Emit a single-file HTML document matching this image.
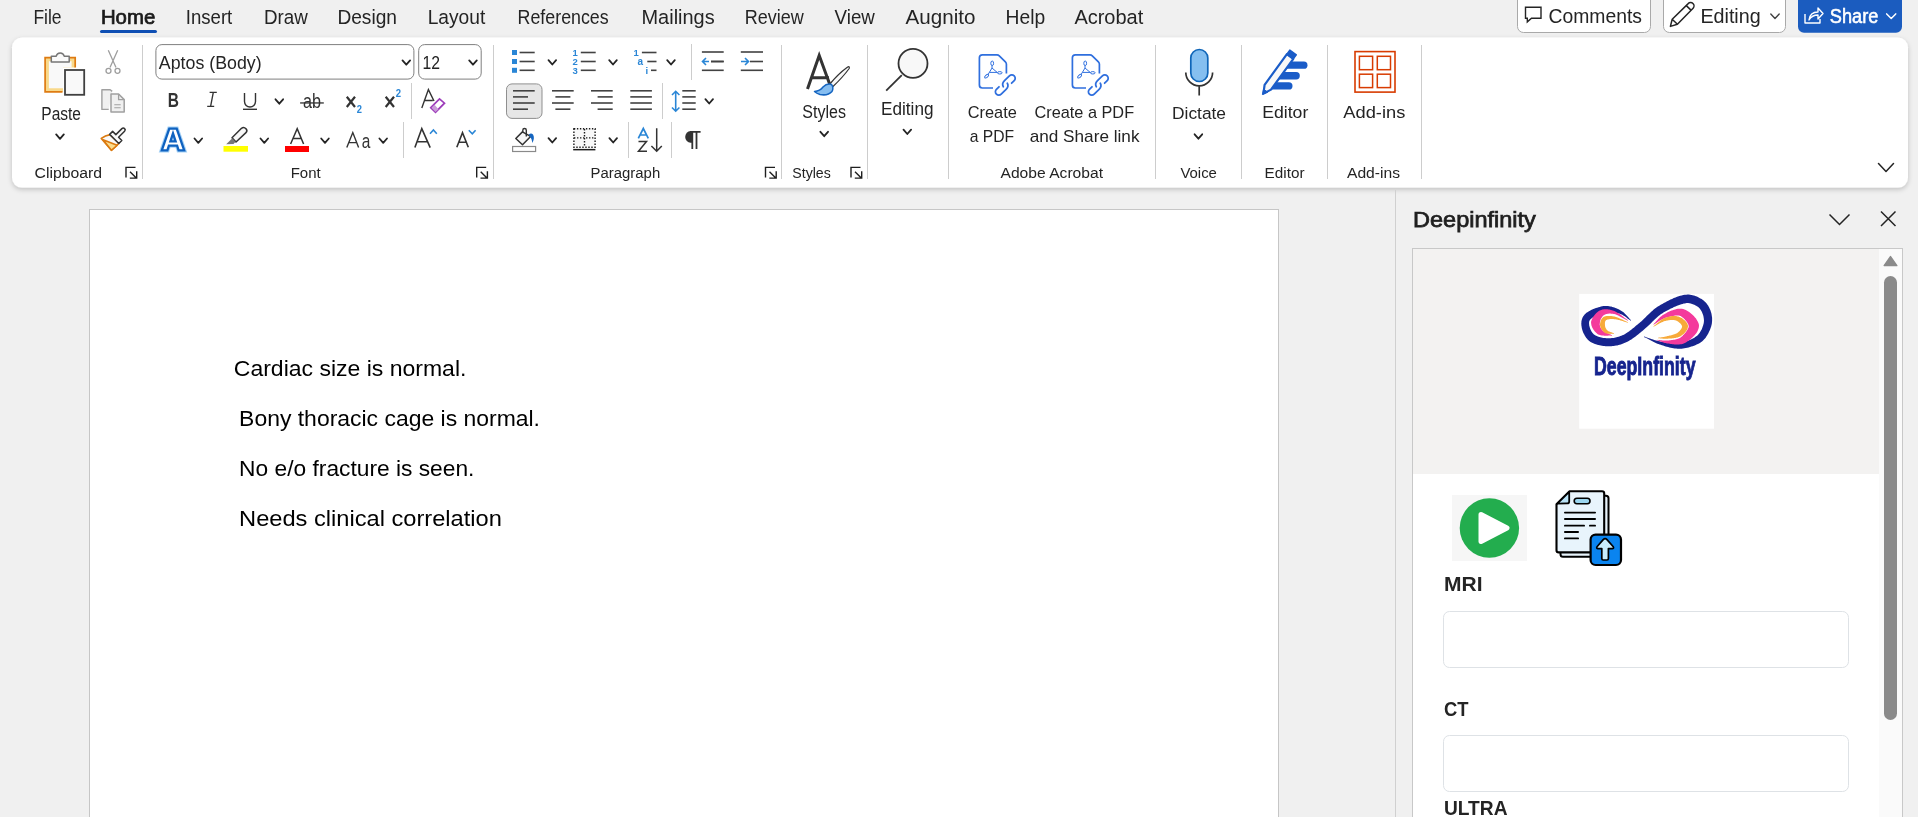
<!DOCTYPE html><html><head><meta charset="utf-8"><style>html,body{margin:0;padding:0;background:#f0f0f0;width:1918px;height:817px;overflow:hidden}svg{position:absolute;left:0;top:0;font-family:"Liberation Sans", sans-serif;-webkit-font-smoothing:antialiased}text{will-change:transform}</style></head><body>
<svg width="1918" height="817" viewBox="0 0 1918 817">
<defs><filter id="sh" x="-5%" y="-20%" width="110%" height="150%"><feDropShadow dx="0" dy="2" stdDeviation="2.8" flood-color="#000" flood-opacity="0.2"/></filter><filter id="sh2" x="-5%" y="-5%" width="110%" height="110%"><feDropShadow dx="0" dy="0" stdDeviation="1" flood-color="#000" flood-opacity="0.10"/></filter></defs>
<rect x="0" y="0" width="1918" height="817" fill="#f0f0f0"/>
<text x="33.4" y="23.9" font-size="19.7" font-weight="normal" fill="#242424" textLength="28.1" lengthAdjust="spacingAndGlyphs">File</text>
<text x="185.8" y="23.9" font-size="19.7" font-weight="normal" fill="#242424" textLength="46.5" lengthAdjust="spacingAndGlyphs">Insert</text>
<text x="264.0" y="23.9" font-size="19.7" font-weight="normal" fill="#242424" textLength="43.8" lengthAdjust="spacingAndGlyphs">Draw</text>
<text x="337.4" y="23.9" font-size="19.7" font-weight="normal" fill="#242424" textLength="59.6" lengthAdjust="spacingAndGlyphs">Design</text>
<text x="427.7" y="23.9" font-size="19.7" font-weight="normal" fill="#242424" textLength="57.6" lengthAdjust="spacingAndGlyphs">Layout</text>
<text x="517.6" y="23.9" font-size="19.7" font-weight="normal" fill="#242424" textLength="91.1" lengthAdjust="spacingAndGlyphs">References</text>
<text x="641.5" y="23.9" font-size="19.7" font-weight="normal" fill="#242424" textLength="73.2" lengthAdjust="spacingAndGlyphs">Mailings</text>
<text x="744.7" y="23.9" font-size="19.7" font-weight="normal" fill="#242424" textLength="59.0" lengthAdjust="spacingAndGlyphs">Review</text>
<text x="834.6" y="23.9" font-size="19.7" font-weight="normal" fill="#242424" textLength="40.2" lengthAdjust="spacingAndGlyphs">View</text>
<text x="905.5" y="23.9" font-size="19.7" font-weight="normal" fill="#242424" textLength="69.9" lengthAdjust="spacingAndGlyphs">Augnito</text>
<text x="1005.6" y="23.9" font-size="19.7" font-weight="normal" fill="#242424" textLength="39.6" lengthAdjust="spacingAndGlyphs">Help</text>
<text x="1074.4" y="23.9" font-size="19.7" font-weight="normal" fill="#242424" textLength="68.9" lengthAdjust="spacingAndGlyphs">Acrobat</text>
<text x="100.9" y="23.9" font-size="19.7" fill="#1a1a1a" stroke="#1a1a1a" stroke-width="0.7" textLength="54.4" lengthAdjust="spacingAndGlyphs">Home</text>
<rect x="100" y="29.9" width="57" height="3.2" rx="1.6" fill="#0f4fb4"/>
<rect x="1517.5" y="-6" width="133" height="38.5" rx="6" fill="#ffffff" stroke="#a9a9a9" stroke-width="1"/>
<path d="M1525.5 7.3 h15.5 v11 h-9.5 l-4.2 3.6 v-3.6 h-1.8 z" fill="none" stroke="#242424" stroke-width="1.4" stroke-linejoin="miter"/>
<text x="1548.5" y="23.4" font-size="19.5" font-weight="normal" fill="#242424" textLength="93.5" lengthAdjust="spacingAndGlyphs">Comments</text>
<rect x="1663.5" y="-6" width="122" height="38.5" rx="6" fill="#ffffff" stroke="#a9a9a9" stroke-width="1"/>
<path d="M1670.4 26.4 L1672.2 19.3 L1688.2 3.6 a2.9 2.9 0 0 1 4.9 4.6 L1677.4 24.3 Z M1672.2 19.3 L1677.4 24.3 M1686.3 5.6 L1691 10.1" fill="none" stroke="#242424" stroke-width="1.5" stroke-linejoin="round"/>
<text x="1700.4" y="23.4" font-size="19.5" font-weight="normal" fill="#242424" textLength="60.3" lengthAdjust="spacingAndGlyphs">Editing</text>
<path d="M1770.8 13.9 L1775.0 18.4 L1779.2 13.9" fill="none" stroke="#424242" stroke-width="1.4" stroke-linecap="round" stroke-linejoin="round"/>
<rect x="1798" y="-6" width="104" height="38.8" rx="6" fill="#1b5cbf"/>
<path d="M1805 14 v9 h15 v-4" fill="none" stroke="#fff" stroke-width="1.4" stroke-linejoin="round"/><path d="M1809 20 q1 -8 9 -8 v-4 l5 5.5 l-5 5.5 v-4 q-6 0 -9 5 z" fill="none" stroke="#fff" stroke-width="1.4" stroke-linejoin="round"/>
<text x="1829.8" y="23.4" font-size="19.5" fill="#fff" stroke="#fff" stroke-width="0.55" textLength="48.5" lengthAdjust="spacingAndGlyphs">Share</text>
<path d="M1886.7 13.9 L1891.2 18.5 L1895.7 13.9" fill="none" stroke="#ffffff" stroke-width="1.5" stroke-linecap="round" stroke-linejoin="round"/>
<rect x="12" y="37.6" width="1896" height="150" rx="10" fill="#ffffff" filter="url(#sh)"/>
<rect x="142" y="45" width="1" height="134" fill="#cdcdcd"/>
<rect x="493" y="45" width="1" height="134" fill="#cdcdcd"/>
<rect x="781" y="45" width="1" height="134" fill="#cdcdcd"/>
<rect x="867" y="45" width="1" height="134" fill="#cdcdcd"/>
<rect x="948" y="45" width="1" height="134" fill="#cdcdcd"/>
<rect x="1155" y="45" width="1" height="134" fill="#cdcdcd"/>
<rect x="1241" y="45" width="1" height="134" fill="#cdcdcd"/>
<rect x="1327" y="45" width="1" height="134" fill="#cdcdcd"/>
<rect x="1421" y="45" width="1" height="134" fill="#cdcdcd"/>
<text x="34.5" y="178.0" font-size="15.5" font-weight="normal" fill="#242424" textLength="67.5" lengthAdjust="spacingAndGlyphs">Clipboard</text>
<text x="290.7" y="178.0" font-size="15.5" font-weight="normal" fill="#242424" textLength="30.0" lengthAdjust="spacingAndGlyphs">Font</text>
<text x="590.6" y="178.0" font-size="15.5" font-weight="normal" fill="#242424" textLength="69.6" lengthAdjust="spacingAndGlyphs">Paragraph</text>
<text x="792.3" y="178.0" font-size="15.5" font-weight="normal" fill="#242424" textLength="38.5" lengthAdjust="spacingAndGlyphs">Styles</text>
<text x="1000.5" y="178.0" font-size="15.5" font-weight="normal" fill="#242424" textLength="102.5" lengthAdjust="spacingAndGlyphs">Adobe Acrobat</text>
<text x="1180.4" y="178.0" font-size="15.5" font-weight="normal" fill="#242424" textLength="36.5" lengthAdjust="spacingAndGlyphs">Voice</text>
<text x="1264.6" y="178.0" font-size="15.5" font-weight="normal" fill="#242424" textLength="39.9" lengthAdjust="spacingAndGlyphs">Editor</text>
<text x="1347.0" y="178.0" font-size="15.5" font-weight="normal" fill="#242424" textLength="53.0" lengthAdjust="spacingAndGlyphs">Add-ins</text>
<path d="M126 177.5 V167.4 H135.5 M130 171.8 L136.3 178.0 M129.8 178.1 H136.7 V171.3" fill="none" stroke="#1f1f1f" stroke-width="1.4"/>
<path d="M476.7 177.5 V167.4 H486.2 M480.7 171.8 L487.0 178.0 M480.5 178.1 H487.4 V171.3" fill="none" stroke="#1f1f1f" stroke-width="1.4"/>
<path d="M765.5 177.5 V167.4 H775.0 M769.5 171.8 L775.8 178.0 M769.3 178.1 H776.2 V171.3" fill="none" stroke="#1f1f1f" stroke-width="1.4"/>
<path d="M851 177.5 V167.4 H860.5 M855 171.8 L861.3 178.0 M854.8 178.1 H861.7 V171.3" fill="none" stroke="#1f1f1f" stroke-width="1.4"/>
<path d="M1878.5 163.5 L1886.0 171.5 L1893.5 163.5" fill="none" stroke="#242424" stroke-width="1.5" stroke-linecap="round" stroke-linejoin="round"/>
<path d="M45.1 57.7 H75.2 V67.5 H63 V91.8 H45.1 Z" fill="#f8d98b"/>
<path d="M48.9 61.2 H71.6 V67.5 H63 V88.2 H48.9 Z" fill="#f9f9f9"/>
<path d="M62.5 91.8 H45.1 V57.7 H75.2 V67.5" fill="none" stroke="#de7b12" stroke-width="1.7"/>
<path d="M51.3 62 V56.2 H56.2 A4.1 4.1 0 0 1 64.2 56.2 H69.2 V62 Z" fill="#fafafa" stroke="#767676" stroke-width="1.5" stroke-linejoin="round"/>
<rect x="63" y="68" width="23" height="28.6" fill="#ffffff"/>
<rect x="65" y="70" width="19.2" height="24.8" fill="#f9f9f9" stroke="#404040" stroke-width="1.8"/>
<text x="41.3" y="120.0" font-size="17.5" font-weight="normal" fill="#242424" textLength="39.7" lengthAdjust="spacingAndGlyphs">Paste</text>
<path d="M56.2 134.4 L60.0 138.8 L63.8 134.4" fill="none" stroke="#242424" stroke-width="1.8" stroke-linecap="round" stroke-linejoin="round"/>
<path d="M108.3 50.3 L116 67.5 M117.7 50.3 L110 67.5" stroke="#9e9e9e" stroke-width="1.3" fill="none"/><circle cx="108.5" cy="70.8" r="2.5" fill="none" stroke="#9e9e9e" stroke-width="1.3"/><circle cx="117.5" cy="70.8" r="2.5" fill="none" stroke="#9e9e9e" stroke-width="1.3"/>
<path d="M108.7 109.4 h-6.8 v-19.6 h8.3 l2 1.6" fill="#f0f0f0" stroke="#a0a0a0" stroke-width="1.4" stroke-linejoin="round"/>
<path d="M111 112 v-18 h7.6 l5.6 5.6 v12.4 z" fill="#f0f0f0" stroke="#a0a0a0" stroke-width="1.5" stroke-linejoin="round"/><path d="M118.6 94 v5.6 h5.6" fill="none" stroke="#a0a0a0" stroke-width="1.3"/><path d="M114.3 104.7 h6.4 M114.3 107.7 h6.4" stroke="#a0a0a0" stroke-width="1.1"/>
<g transform="translate(115.8 137.4) rotate(45)"><path d="M-6 2 Q-9 6 -9.5 11 L6 12.2 L6.3 2 Z" fill="#fafafa" stroke="#db7a10" stroke-width="1.7" stroke-linejoin="round"/><path d="M-7.3 10.7 L6.5 4.7 L6 12.2 Z" fill="#fbdc8c" stroke="#db7a10" stroke-width="1.5" stroke-linejoin="round"/><path d="M-6.5 2.2 v-4.2 h4.6 v-8.5 a1.9 1.9 0 0 1 3.8 0 v8.5 h4.6 v4.2 z" fill="#fafafa" stroke="#333" stroke-width="1.5" stroke-linejoin="round"/></g>
<rect x="155.9" y="44.6" width="258" height="34.5" rx="6" fill="#fff" stroke="#7f7f7f" stroke-width="1"/>
<text x="158.8" y="69.1" font-size="17.6" font-weight="normal" fill="#242424" textLength="102.8" lengthAdjust="spacingAndGlyphs">Aptos (Body)</text>
<path d="M402.5 60.4 L406.3 64.7 L410.1 60.4" fill="none" stroke="#242424" stroke-width="1.8" stroke-linecap="round" stroke-linejoin="round"/>
<rect x="418.7" y="44.6" width="62.5" height="34.5" rx="6" fill="#fff" stroke="#7f7f7f" stroke-width="1"/>
<text x="422.5" y="69.1" font-size="17.6" font-weight="normal" fill="#242424" textLength="17.5" lengthAdjust="spacingAndGlyphs">12</text>
<path d="M469.2 60.4 L473.0 64.7 L476.8 60.4" fill="none" stroke="#242424" stroke-width="1.8" stroke-linecap="round" stroke-linejoin="round"/>
<text x="167.8" y="106.8" font-size="20" font-weight="bold" fill="#333333" textLength="11.2" lengthAdjust="spacingAndGlyphs">B</text>
<path d="M213.3 92.3 L210.6 106.4 M209.6 92.3 h7.2 M207.2 106.4 h7" stroke="#333333" stroke-width="1.35" fill="none"/>
<path d="M244.5 93 v8.5 a5.5 5.5 0 0 0 11 0 v-8.5" fill="none" stroke="#333333" stroke-width="1.4"/>
<rect x="243" y="108.6" width="14" height="1.4" fill="#333333"/>
<path d="M275.5 99.3 L279.3 103.7 L283.1 99.3" fill="none" stroke="#242424" stroke-width="1.8" stroke-linecap="round" stroke-linejoin="round"/>
<text x="302.9" y="108.4" font-size="19.5" font-weight="normal" fill="#333333" textLength="18.0" lengthAdjust="spacingAndGlyphs">ab</text>
<rect x="300.1" y="102.3" width="23.7" height="1.3" fill="#333333"/>
<path d="M346.8 96.8 L355 107 M355 96.8 L346.8 107" stroke="#333333" stroke-width="2.2"/>
<text x="356.8" y="112.9" font-size="10.5" font-weight="bold" fill="#2a86d6" textLength="5.2" lengthAdjust="spacingAndGlyphs">2</text>
<path d="M385.7 96.8 L394 107 M394 96.8 L385.7 107" stroke="#333333" stroke-width="2.2"/>
<text x="395.8" y="96.6" font-size="10.5" font-weight="bold" fill="#2a86d6" textLength="5.3" lengthAdjust="spacingAndGlyphs">2</text>
<rect x="411" y="83" width="1" height="36" fill="#cdcdcd"/>
<path d="M421.8 108 L428.4 89.6 L434 101 M423.8 100.5 h9" fill="none" stroke="#333333" stroke-width="1.4"/>
<path d="M430.8 107.7 L439.5 98.9 L444.5 103.2 L435.5 112.2 Z" fill="#fff" stroke="#9d3dba" stroke-width="1.7" stroke-linejoin="miter"/><path d="M431.5 107.7 L434.5 104.8 L438.5 109.2 L435.5 112 Z" fill="#c99bd8"/>
<path d="M161.8 150.3 L169.3 128.6 L176.7 128.6 L184.2 150.3 L178.6 150.3 L177.1 145.6 L168.9 145.6 L167.4 150.3 Z M170.4 141.3 L175.6 141.3 L173 133.4 Z" fill="#fff" stroke="#a6d2f6" stroke-width="4.4" stroke-linejoin="miter" fill-rule="evenodd"/>
<path d="M161.8 150.3 L169.3 128.6 L176.7 128.6 L184.2 150.3 L178.6 150.3 L177.1 145.6 L168.9 145.6 L167.4 150.3 Z M170.4 141.3 L175.6 141.3 L173 133.4 Z" fill="#fff" stroke="#0f62c0" stroke-width="2.3" stroke-linejoin="miter" fill-rule="evenodd"/>
<path d="M194.5 138.5 L198.3 142.8 L202.1 138.5" fill="none" stroke="#242424" stroke-width="1.8" stroke-linecap="round" stroke-linejoin="round"/>
<path d="M232 137.7 L241.5 128.3 Q243.8 126.5 246 128.8 Q247.8 131 246 132.6 L236 142 Z" fill="#f8f8f8" stroke="#333333" stroke-width="1.5" stroke-linejoin="round"/>
<path d="M232.3 138.3 L235.6 141.7 L233.5 144 L226.2 144.3 Z" fill="#777"/>
<rect x="223.5" y="146" width="24.5" height="5.7" fill="#ffff00"/>
<path d="M260.5 138.5 L264.3 142.8 L268.1 138.5" fill="none" stroke="#242424" stroke-width="1.8" stroke-linecap="round" stroke-linejoin="round"/>
<path d="M290.6 144 L297.2 128.6 L303.6 144 M292.9 138.6 h8.6" fill="none" stroke="#333333" stroke-width="1.5"/>
<rect x="285" y="146" width="24" height="6" fill="#ff0000"/>
<path d="M321.2 138.5 L325.0 142.8 L328.8 138.5" fill="none" stroke="#242424" stroke-width="1.8" stroke-linecap="round" stroke-linejoin="round"/>
<path d="M346.8 147.6 L352.8 132.6 L358.6 147.6 M348.9 142.6 h7.8" fill="none" stroke="#333333" stroke-width="1.4"/>
<text x="361.8" y="147.6" font-size="20.5" font-weight="normal" fill="#333333" textLength="8.6" lengthAdjust="spacingAndGlyphs">a</text>
<path d="M379.4 138.5 L383.2 142.8 L387.0 138.5" fill="none" stroke="#242424" stroke-width="1.8" stroke-linecap="round" stroke-linejoin="round"/>
<rect x="403" y="122" width="1" height="36" fill="#cdcdcd"/>
<path d="M414.9 147.6 L421.8 128.6 L430.2 147.6 M417.6 141.8 h10" fill="none" stroke="#333333" stroke-width="1.6"/><path d="M430 133.7 L433.4 130 L436.8 133.7" fill="none" stroke="#2a86d6" stroke-width="1.6"/>
<path d="M456.8 147.2 L462.5 132.6 L468.3 147.2 M458.8 142.3 h7.5" fill="none" stroke="#333333" stroke-width="1.6"/><path d="M468.8 130.2 L472.3 133.8 L475.6 130.2" fill="none" stroke="#2a86d6" stroke-width="1.6"/>
<rect x="512" y="50.0" width="5" height="5" fill="#2a86d6"/>
<rect x="519.6" y="51.7" width="15.1" height="1.6" fill="#424242"/>
<rect x="512" y="59.0" width="5" height="5" fill="#2a86d6"/>
<rect x="519.6" y="60.7" width="15.1" height="1.6" fill="#424242"/>
<rect x="512" y="67.8" width="5" height="5" fill="#2a86d6"/>
<rect x="519.6" y="69.5" width="15.1" height="1.6" fill="#424242"/>
<path d="M548.5 60.1 L552.3 64.5 L556.1 60.1" fill="none" stroke="#242424" stroke-width="1.8" stroke-linecap="round" stroke-linejoin="round"/>
<text x="572.5" y="56.1" font-size="9.5" font-weight="bold" fill="#2a86d6">1</text>
<rect x="580.8" y="51.7" width="14.9" height="1.6" fill="#424242"/>
<text x="572.5" y="65.1" font-size="9.5" font-weight="bold" fill="#2a86d6">2</text>
<rect x="580.8" y="60.7" width="14.9" height="1.6" fill="#424242"/>
<text x="572.5" y="73.89999999999999" font-size="9.5" font-weight="bold" fill="#2a86d6">3</text>
<rect x="580.8" y="69.5" width="14.9" height="1.6" fill="#424242"/>
<path d="M609.2 60.1 L613.0 64.5 L616.8 60.1" fill="none" stroke="#242424" stroke-width="1.8" stroke-linecap="round" stroke-linejoin="round"/>
<text x="633.5" y="56" font-size="9.5" font-weight="bold" fill="#2a86d6">1</text><text x="637.5" y="65" font-size="10" font-weight="bold" fill="#2a86d6">a</text><text x="645.5" y="74" font-size="9.5" font-weight="bold" fill="#2a86d6">i</text>
<rect x="641.9" y="51.7" width="14.6" height="1.6" fill="#424242"/>
<rect x="647.3" y="60.7" width="9.2" height="1.6" fill="#424242"/>
<rect x="651.0" y="69.5" width="5.5" height="1.6" fill="#424242"/>
<path d="M667.2 60.1 L671.0 64.5 L674.8 60.1" fill="none" stroke="#242424" stroke-width="1.8" stroke-linecap="round" stroke-linejoin="round"/>
<rect x="691" y="44" width="1" height="36" fill="#cdcdcd"/>
<rect x="701.9" y="51.2" width="21.8" height="1.6" fill="#424242"/>
<rect x="711.0" y="60.7" width="12.7" height="1.6" fill="#424242"/>
<rect x="711.0" y="60.7" width="12.7" height="1.6" fill="#424242"/>
<rect x="701.9" y="69.5" width="21.8" height="1.6" fill="#424242"/>
<path d="M709 61.5 h-6.5 M706 58 l-3.5 3.5 l3.5 3.5" fill="none" stroke="#2a86d6" stroke-width="1.6"/>
<rect x="740.8" y="51.2" width="22.2" height="1.6" fill="#424242"/>
<rect x="750.0" y="60.7" width="13.0" height="1.6" fill="#424242"/>
<rect x="740.8" y="69.5" width="22.2" height="1.6" fill="#424242"/>
<path d="M741 61.5 h7 M745 58 l3.5 3.5 l-3.5 3.5" fill="none" stroke="#2a86d6" stroke-width="1.6"/>
<rect x="506.5" y="83.9" width="35.5" height="34.5" rx="5.5" fill="#e6e6e6" stroke="#8f8f8f" stroke-width="1"/>
<rect x="513.0" y="90.0" width="21.7" height="1.6" fill="#424242"/>
<rect x="513.0" y="96.1" width="15.0" height="1.6" fill="#424242"/>
<rect x="513.0" y="102.2" width="21.7" height="1.6" fill="#424242"/>
<rect x="513.0" y="108.4" width="15.0" height="1.6" fill="#424242"/>
<rect x="552.0" y="90.0" width="21.7" height="1.6" fill="#424242"/>
<rect x="555.4" y="96.1" width="15.0" height="1.6" fill="#424242"/>
<rect x="552.0" y="102.2" width="21.7" height="1.6" fill="#424242"/>
<rect x="555.4" y="108.4" width="15.0" height="1.6" fill="#424242"/>
<rect x="591.0" y="90.0" width="21.7" height="1.6" fill="#424242"/>
<rect x="597.6" y="96.1" width="15.1" height="1.6" fill="#424242"/>
<rect x="591.0" y="102.2" width="21.7" height="1.6" fill="#424242"/>
<rect x="597.6" y="108.4" width="15.1" height="1.6" fill="#424242"/>
<rect x="630.3" y="90.0" width="21.6" height="1.6" fill="#424242"/>
<rect x="630.3" y="96.1" width="21.6" height="1.6" fill="#424242"/>
<rect x="630.3" y="102.2" width="21.6" height="1.6" fill="#424242"/>
<rect x="630.3" y="108.4" width="21.6" height="1.6" fill="#424242"/>
<rect x="662" y="83" width="1" height="36" fill="#cdcdcd"/>
<path d="M675.7 91.5 v19.5 M672 95 l3.7 -3.7 l3.7 3.7 M672 107.5 l3.7 3.7 l3.7 -3.7" fill="none" stroke="#2a86d6" stroke-width="1.6"/>
<rect x="682.3" y="90.0" width="13.4" height="1.6" fill="#424242"/>
<rect x="682.3" y="96.1" width="13.4" height="1.6" fill="#424242"/>
<rect x="682.3" y="102.2" width="13.4" height="1.6" fill="#424242"/>
<rect x="682.3" y="108.4" width="13.4" height="1.6" fill="#424242"/>
<path d="M705.4 99.1 L709.2 103.5 L713.0 99.1" fill="none" stroke="#242424" stroke-width="1.8" stroke-linecap="round" stroke-linejoin="round"/>
<path d="M515.8 138.5 L522.4 131.9 L530.6 136.4 L522.5 144.8 Z" fill="#f8f8f8" stroke="#333333" stroke-width="1.5" stroke-linejoin="round"/>
<path d="M526.3 136.4 V130.2 a1.75 1.75 0 0 0 -3.5 0 V132.3" fill="none" stroke="#333333" stroke-width="1.4"/>
<path d="M528.8 134.6 Q531 132.6 533 134.5 Q535 137.5 532.5 143 Q532.2 139 529.8 136.5 Z" fill="#1565c0"/>
<rect x="512.6" y="146.5" width="23" height="5" fill="#fff" stroke="#8a8a8a" stroke-width="1.2"/>
<path d="M548.5 138.2 L552.3 142.5 L556.1 138.2" fill="none" stroke="#242424" stroke-width="1.8" stroke-linecap="round" stroke-linejoin="round"/>
<rect x="573.9" y="128.8" width="21.2" height="18.4" fill="#f8f8f8" stroke="#1a1a1a" stroke-width="1.4" stroke-dasharray="1.4 1.6"/><path d="M584.5 129 v18 M574 137.9 h21" stroke="#1a1a1a" stroke-width="1.4" stroke-dasharray="1.4 1.6"/>
<rect x="573.2" y="148.9" width="22.2" height="1.5" fill="#1a1a1a"/>
<path d="M609.4 138.2 L613.2 142.5 L617.0 138.2" fill="none" stroke="#242424" stroke-width="1.8" stroke-linecap="round" stroke-linejoin="round"/>
<rect x="628" y="122" width="1" height="36" fill="#cdcdcd"/>
<path d="M638.3 138.4 L643.3 128.5 L648.3 138.4 M640 135 h6.6" fill="none" stroke="#2a86d6" stroke-width="1.7"/>
<path d="M638.5 141.6 h8 L638.5 151.2 h8.5" fill="none" stroke="#333333" stroke-width="1.5"/>
<path d="M656.7 128.2 v22.8 M651.4 146 l5.3 5.3 l5.1 -5.3" fill="none" stroke="#333333" stroke-width="1.5"/>
<rect x="671" y="122" width="1" height="36" fill="#cdcdcd"/>
<path d="M692.3 132 V149 M696.5 132 V149 M690 131.9 H700.6" stroke="#333333" stroke-width="1.8" fill="none"/><path d="M693 131 H690.6 A5.4 5.9 0 0 0 690.6 142.8 H693 Z" fill="#333333"/>
<path d="M807.5 89 L819.2 55.5 L830 85 M811 77.8 h18" fill="none" stroke="#333333" stroke-width="3"/>
<path d="M829.5 84.5 Q838 74 847 67.5 Q850 65.5 849.2 68.5 Q843 77 833 86.5 Z" fill="#f8f8f8" stroke="#333333" stroke-width="1.2" stroke-linejoin="round"/>
<path d="M814.5 91.5 Q820 91 823 87 Q827 83 831.5 84.5 Q834 87.5 832 91.5 Q828 96 820 94.5 Q816.5 93.5 814.5 91.5 Z" fill="#85bdf0" stroke="#1565c0" stroke-width="1.5" stroke-linejoin="round"/>
<text x="802.3" y="118.0" font-size="18.3" font-weight="normal" fill="#242424" textLength="43.6" lengthAdjust="spacingAndGlyphs">Styles</text>
<path d="M820.4 131.8 L824.2 136.2 L828.0 131.8" fill="none" stroke="#242424" stroke-width="1.8" stroke-linecap="round" stroke-linejoin="round"/>
<circle cx="913" cy="63.4" r="14.5" fill="#f8f8f8" stroke="#333333" stroke-width="1.8"/><path d="M886.2 90.6 L901.8 75.2" stroke="#333333" stroke-width="1.8"/>
<text x="881.0" y="115.3" font-size="18.4" font-weight="normal" fill="#242424" textLength="52.5" lengthAdjust="spacingAndGlyphs">Editing</text>
<path d="M903.5 129.7 L907.3 134.0 L911.1 129.7" fill="none" stroke="#242424" stroke-width="1.8" stroke-linecap="round" stroke-linejoin="round"/>
<path d="M993 88 H982.4 a3 3 0 0 1 -3 -3 V57.8 a3 3 0 0 1 3 -3 H997 Q998.3 54.8 999.3 55.8 L1005.4 61.9 Q1006.4 62.9 1006.4 64.3 V73.5" transform="translate(0 0)" fill="none" stroke="#2f6fde" stroke-width="1.7" stroke-linejoin="round"/>
<g transform="translate(0 0)" fill="none" stroke="#2f6fde" stroke-width="1"><ellipse cx="992.2" cy="63.3" rx="1.4" ry="2.3"/><ellipse cx="999.8" cy="72.8" rx="2.3" ry="1.2"/><ellipse cx="986.6" cy="76.2" rx="2.4" ry="1.2" transform="rotate(-40 986.6 76.2)"/><path d="M992 65.3 V68 L988 74.6 M992 68 L997.4 72.6 M989.6 72.4 H997.4"/></g>
<g transform="translate(0 0)" fill="none" stroke="#2f6fde" stroke-width="1.75" stroke-linecap="round"><path d="M1003.3 86.8 Q1001.5 83.7 1004.5 80.7 L1009.4 75.8 A3.35 3.35 0 0 1 1014.2 80.6 L1011.6 83.2"/><path d="M1007.3 83.2 Q1009.1 86.3 1006.1 89.3 L1001.2 94.2 A3.35 3.35 0 0 1 996.4 89.4 L999 86.8"/></g>
<path d="M993 88 H982.4 a3 3 0 0 1 -3 -3 V57.8 a3 3 0 0 1 3 -3 H997 Q998.3 54.8 999.3 55.8 L1005.4 61.9 Q1006.4 62.9 1006.4 64.3 V73.5" transform="translate(93 0)" fill="none" stroke="#2f6fde" stroke-width="1.7" stroke-linejoin="round"/>
<g transform="translate(93 0)" fill="none" stroke="#2f6fde" stroke-width="1"><ellipse cx="992.2" cy="63.3" rx="1.4" ry="2.3"/><ellipse cx="999.8" cy="72.8" rx="2.3" ry="1.2"/><ellipse cx="986.6" cy="76.2" rx="2.4" ry="1.2" transform="rotate(-40 986.6 76.2)"/><path d="M992 65.3 V68 L988 74.6 M992 68 L997.4 72.6 M989.6 72.4 H997.4"/></g>
<g transform="translate(93 0)" fill="none" stroke="#2f6fde" stroke-width="1.75" stroke-linecap="round"><path d="M1003.3 86.8 Q1001.5 83.7 1004.5 80.7 L1009.4 75.8 A3.35 3.35 0 0 1 1014.2 80.6 L1011.6 83.2"/><path d="M1007.3 83.2 Q1009.1 86.3 1006.1 89.3 L1001.2 94.2 A3.35 3.35 0 0 1 996.4 89.4 L999 86.8"/></g>
<text x="967.7" y="117.5" font-size="17" font-weight="normal" fill="#242424" textLength="49.1" lengthAdjust="spacingAndGlyphs">Create</text>
<text x="969.8" y="141.5" font-size="17" font-weight="normal" fill="#242424" textLength="44.4" lengthAdjust="spacingAndGlyphs">a PDF</text>
<text x="1034.5" y="117.5" font-size="17" font-weight="normal" fill="#242424" textLength="99.6" lengthAdjust="spacingAndGlyphs">Create a PDF</text>
<text x="1029.7" y="141.5" font-size="17" font-weight="normal" fill="#242424" textLength="109.8" lengthAdjust="spacingAndGlyphs">and Share link</text>
<rect x="1190.8" y="49.5" width="17" height="32" rx="8.5" fill="#85bff0" stroke="#0f65b8" stroke-width="1.7"/>
<path d="M1185.8 72.5 a13.4 13.4 0 0 0 26.8 0 M1199.2 86 v9.5" fill="none" stroke="#333333" stroke-width="1.7"/>
<text x="1172.0" y="119.4" font-size="17.2" font-weight="normal" fill="#242424" textLength="54.0" lengthAdjust="spacingAndGlyphs">Dictate</text>
<path d="M1194.6 134.3 L1198.4 138.7 L1202.2 134.3" fill="none" stroke="#242424" stroke-width="1.8" stroke-linecap="round" stroke-linejoin="round"/>
<rect x="1280" y="61.5" width="27.5" height="7.3" rx="3.65" fill="#1a5cc8"/><rect x="1272" y="72.1" width="27.8" height="7.3" rx="3.65" fill="#1a5cc8"/><rect x="1266" y="82.3" width="26.5" height="7.3" rx="3.65" fill="#1a5cc8"/>
<path d="M1263.4 93.6 L1264.6 84.9 L1286.9 54.1 L1293.3 58.8 L1271 89.6 Z" fill="#f8f8f8" stroke="#1a5cc8" stroke-width="2.2" stroke-linejoin="round"/>
<path d="M1286.9 54.1 L1289.8 50.1 L1296.3 54.8 L1293.3 58.8 Z" fill="#1a5cc8" stroke="#1a5cc8" stroke-width="1.5" stroke-linejoin="round"/>
<path d="M1262.4 94.6 L1263.6 89.2 L1267.8 92.2 Z" fill="#1a5cc8" stroke="#1a5cc8" stroke-width="1"/>
<text x="1262.2" y="117.9" font-size="17.2" font-weight="normal" fill="#242424" textLength="46.1" lengthAdjust="spacingAndGlyphs">Editor</text>
<rect x="1355" y="51.6" width="40" height="40.5" fill="none" stroke="#d83b01" stroke-width="1.6"/>
<rect x="1359.4" y="56.3" width="13.2" height="13.4" fill="none" stroke="#d83b01" stroke-width="1.5"/>
<rect x="1377.3" y="56.3" width="13.2" height="13.4" fill="none" stroke="#d83b01" stroke-width="1.5"/>
<rect x="1359.4" y="74.2" width="13.2" height="13.4" fill="none" stroke="#d83b01" stroke-width="1.5"/>
<rect x="1377.3" y="74.2" width="13.2" height="13.4" fill="none" stroke="#d83b01" stroke-width="1.5"/>
<text x="1343.3" y="117.9" font-size="17.2" font-weight="normal" fill="#242424" textLength="62.0" lengthAdjust="spacingAndGlyphs">Add-ins</text>
<rect x="89.5" y="209.5" width="1189" height="620" fill="#ffffff" stroke="#c6c6c6" stroke-width="1"/>
<text x="233.8" y="376.0" font-size="22.9" font-weight="normal" fill="#000000" textLength="232.6" lengthAdjust="spacingAndGlyphs">Cardiac size is normal.</text>
<text x="239.1" y="426.0" font-size="22.9" font-weight="normal" fill="#000000" textLength="300.9" lengthAdjust="spacingAndGlyphs">Bony thoracic cage is normal.</text>
<text x="239.1" y="476.0" font-size="22.9" font-weight="normal" fill="#000000" textLength="235.3" lengthAdjust="spacingAndGlyphs">No e/o fracture is seen.</text>
<text x="239.1" y="526.0" font-size="22.9" font-weight="normal" fill="#000000" textLength="262.8" lengthAdjust="spacingAndGlyphs">Needs clinical correlation</text>
<rect x="1395" y="190" width="1" height="627" fill="#d0d0d0"/>
<text x="1413" y="226.9" font-size="21.8" fill="#1f1f1f" stroke="#1f1f1f" stroke-width="0.75" textLength="122.9" lengthAdjust="spacingAndGlyphs">Deepinfinity</text>
<path d="M1829.5 214.5 L1839.5 224.5 L1849.5 214.5" fill="none" stroke="#242424" stroke-width="1.5"/>
<path d="M1881 211.5 L1895.5 226 M1895.5 211.5 L1881 226" fill="none" stroke="#242424" stroke-width="1.5"/>
<rect x="1412.5" y="248.5" width="490" height="600" fill="#ffffff" stroke="#c8c8c8" stroke-width="1"/>
<rect x="1413" y="249" width="466" height="225" fill="#f3f2f1"/>
<rect x="1879" y="249" width="23" height="568" fill="#fafafa"/>
<path d="M1884.2 265.6 L1890.5 256.6 L1896.8 265.6 z" fill="#8a8a8a" stroke="#8a8a8a" stroke-width="1.5" stroke-linejoin="round"/>
<rect x="1884" y="276" width="13" height="444" rx="6.5" fill="#8a8a8a"/>
<rect x="1579.2" y="293.9" width="134.8" height="134.8" fill="#ffffff"/>
<path d="M1631.1 320.3 L1630.5 319.7 L1629.9 319.1 L1629.3 318.5 L1628.7 317.8 L1628.2 317.1 L1627.6 316.5 L1627.0 315.8 L1626.4 315.2 L1625.8 314.5 L1625.1 313.9 L1624.5 313.2 L1623.8 312.6 L1623.1 312.0 L1622.3 311.4 L1621.5 310.9 L1620.7 310.4 L1619.9 309.9 L1619.0 309.5 L1618.1 309.1 L1617.2 308.7 L1616.3 308.3 L1615.4 307.9 L1614.4 307.5 L1613.4 307.2 L1612.3 306.9 L1611.3 306.6 L1610.2 306.4 L1609.1 306.2 L1608.0 306.1 L1606.9 306.0 L1605.7 306.0 L1604.6 306.0 L1603.4 306.1 L1602.2 306.3 L1601.0 306.6 L1599.7 306.9 L1598.5 307.3 L1597.2 307.7 L1595.9 308.1 L1594.7 308.6 L1593.4 309.1 L1592.2 309.6 L1591.1 310.1 L1590.0 310.7 L1588.9 311.3 L1587.9 311.9 L1586.9 312.5 L1586.1 313.1 L1585.3 313.9 L1584.6 314.6 L1583.9 315.4 L1583.3 316.2 L1582.8 317.1 L1582.4 317.9 L1582.1 318.8 L1581.8 319.7 L1581.6 320.6 L1581.4 321.5 L1581.4 322.4 L1581.3 323.2 L1581.3 324.1 L1581.4 325.0 L1581.4 325.8 L1581.6 326.6 L1581.7 327.5 L1581.9 328.4 L1582.1 329.3 L1582.4 330.3 L1582.7 331.2 L1583.1 332.2 L1583.5 333.2 L1584.0 334.1 L1584.5 335.1 L1585.0 336.1 L1585.7 337.0 L1586.3 337.9 L1587.1 338.8 L1587.8 339.7 L1588.7 340.5 L1589.6 341.2 L1590.6 341.9 L1591.6 342.5 L1592.7 343.0 L1593.8 343.5 L1594.9 343.9 L1596.0 344.3 L1597.2 344.7 L1598.4 345.0 L1599.6 345.3 L1600.8 345.5 L1602.0 345.8 L1603.2 345.9 L1604.4 346.1 L1605.6 346.2 L1606.8 346.3 L1607.9 346.3 L1609.1 346.3 L1610.2 346.3 L1611.4 346.2 L1612.6 346.1 L1613.7 346.0 L1614.9 345.8 L1616.1 345.6 L1617.3 345.4 L1618.5 345.1 L1619.7 344.8 L1620.8 344.4 L1622.0 344.0 L1623.2 343.6 L1624.4 343.1 L1625.6 342.6 L1626.7 342.1 L1627.9 341.5 L1629.1 340.8 L1630.3 340.1 L1631.4 339.4 L1632.6 338.6 L1633.7 337.8 L1634.8 337.0 L1635.9 336.2 L1637.0 335.3 L1638.1 334.4 L1639.2 333.5 L1640.2 332.7 L1641.3 331.8 L1642.4 330.9 L1643.5 330.0 L1644.6 329.1 L1645.7 328.1 L1646.9 327.1 L1648.0 326.1 L1649.1 325.0 L1650.2 323.9 L1651.2 322.9 L1652.3 321.8 L1653.4 320.7 L1654.4 319.7 L1655.5 318.7 L1656.6 317.7 L1657.7 316.8 L1658.8 315.8 L1659.9 315.0 L1661.0 314.1 L1662.2 313.4 L1663.4 312.6 L1664.8 311.8 L1666.2 311.0 L1667.7 310.2 L1669.2 309.4 L1670.8 308.6 L1672.4 307.9 L1673.9 307.1 L1675.5 306.5 L1677.0 305.8 L1678.5 305.2 L1679.9 304.7 L1681.3 304.3 L1682.6 303.9 L1683.7 303.6 L1684.8 303.4 L1685.7 303.2 L1686.6 303.1 L1687.5 303.1 L1688.3 303.1 L1689.1 303.2 L1689.9 303.3 L1690.6 303.5 L1691.4 303.7 L1692.1 303.9 L1692.8 304.2 L1693.5 304.4 L1694.2 304.8 L1694.9 305.1 L1695.5 305.4 L1696.2 305.8 L1696.9 306.2 L1697.4 306.5 L1697.8 306.8 L1698.3 307.1 L1698.7 307.5 L1699.1 307.9 L1699.5 308.3 L1699.9 308.7 L1700.2 309.2 L1700.6 309.7 L1700.9 310.2 L1701.2 310.7 L1701.5 311.2 L1701.8 311.8 L1702.0 312.3 L1702.3 312.9 L1702.5 313.5 L1702.7 314.1 L1703.0 314.7 L1703.2 315.3 L1703.3 315.9 L1703.5 316.6 L1703.6 317.3 L1703.7 317.9 L1703.8 318.6 L1703.9 319.3 L1703.9 320.0 L1704.0 320.6 L1703.9 321.3 L1703.9 322.0 L1703.8 322.6 L1703.7 323.3 L1703.5 324.0 L1703.3 324.7 L1703.1 325.5 L1702.8 326.3 L1702.5 327.2 L1702.2 328.0 L1701.9 328.9 L1701.5 329.7 L1701.0 330.5 L1700.6 331.3 L1700.1 332.1 L1699.6 332.9 L1699.1 333.6 L1698.5 334.3 L1698.0 334.9 L1697.4 335.5 L1696.7 336.0 L1696.0 336.6 L1695.2 337.1 L1694.4 337.7 L1693.4 338.2 L1692.4 338.8 L1691.4 339.3 L1690.2 339.8 L1689.1 340.3 L1687.9 340.7 L1686.8 341.1 L1685.6 341.5 L1684.4 341.8 L1683.2 342.1 L1682.0 342.4 L1680.8 342.6 L1679.7 342.8 L1678.6 343.0 L1677.5 343.1 L1676.3 343.2 L1675.1 343.2 L1673.9 343.2 L1672.7 343.2 L1671.5 343.1 L1670.2 343.0 L1668.9 342.9 L1667.7 342.7 L1666.4 342.5 L1665.2 342.3 L1663.9 342.1 L1662.7 341.9 L1661.5 341.7 L1660.4 341.5 L1659.3 341.3 L1658.2 341.1 L1657.2 340.8 L1656.1 340.6 L1655.1 340.3 L1654.1 340.0 L1653.1 339.6 L1652.1 339.3 L1651.1 338.9 L1650.1 338.6 L1649.1 338.2 L1648.1 337.9 L1647.1 337.5 L1646.1 337.2 L1645.1 336.8 L1644.1 336.5 L1643.9 336.9 L1644.9 337.4 L1645.8 337.8 L1646.8 338.3 L1647.7 338.8 L1648.6 339.3 L1649.5 339.8 L1650.5 340.3 L1651.4 340.8 L1652.4 341.3 L1653.3 341.8 L1654.3 342.3 L1655.3 342.8 L1656.3 343.2 L1657.4 343.7 L1658.5 344.1 L1659.6 344.5 L1660.8 344.8 L1661.9 345.2 L1663.1 345.6 L1664.3 346.0 L1665.6 346.4 L1666.8 346.7 L1668.1 347.1 L1669.4 347.4 L1670.8 347.7 L1672.1 348.0 L1673.4 348.3 L1674.8 348.5 L1676.2 348.6 L1677.5 348.7 L1678.9 348.8 L1680.3 348.8 L1681.6 348.7 L1683.0 348.5 L1684.4 348.3 L1685.8 348.1 L1687.2 347.8 L1688.6 347.4 L1690.0 347.0 L1691.3 346.6 L1692.7 346.2 L1694.0 345.7 L1695.3 345.2 L1696.6 344.6 L1697.9 344.0 L1699.0 343.4 L1700.2 342.7 L1701.3 342.0 L1702.3 341.2 L1703.3 340.3 L1704.2 339.3 L1705.0 338.4 L1705.8 337.4 L1706.5 336.3 L1707.2 335.3 L1707.8 334.3 L1708.4 333.2 L1708.9 332.1 L1709.4 331.1 L1709.9 330.0 L1710.3 329.0 L1710.6 328.0 L1711.0 327.0 L1711.3 326.0 L1711.5 325.0 L1711.8 324.0 L1711.9 322.9 L1712.0 321.9 L1712.1 320.9 L1712.1 319.8 L1712.1 318.8 L1712.1 317.8 L1712.0 316.9 L1711.8 315.9 L1711.7 314.9 L1711.5 314.0 L1711.3 313.1 L1711.0 312.2 L1710.8 311.4 L1710.5 310.5 L1710.2 309.7 L1709.8 308.9 L1709.4 308.1 L1709.0 307.2 L1708.6 306.4 L1708.1 305.6 L1707.6 304.9 L1707.0 304.1 L1706.4 303.3 L1705.8 302.6 L1705.1 301.9 L1704.4 301.2 L1703.6 300.6 L1702.8 299.9 L1702.0 299.3 L1701.1 298.8 L1700.3 298.4 L1699.5 297.9 L1698.7 297.5 L1697.8 297.1 L1696.9 296.6 L1695.9 296.2 L1694.8 295.8 L1693.7 295.5 L1692.6 295.2 L1691.4 294.9 L1690.1 294.8 L1688.8 294.6 L1687.5 294.6 L1686.1 294.7 L1684.7 294.8 L1683.2 295.0 L1681.7 295.4 L1680.2 295.8 L1678.7 296.3 L1677.1 296.8 L1675.5 297.5 L1673.8 298.1 L1672.1 298.9 L1670.5 299.6 L1668.8 300.5 L1667.1 301.3 L1665.5 302.2 L1663.9 303.0 L1662.3 303.9 L1660.7 304.8 L1659.3 305.7 L1657.8 306.6 L1656.4 307.6 L1655.0 308.6 L1653.7 309.6 L1652.5 310.7 L1651.2 311.8 L1650.0 312.9 L1648.9 313.9 L1647.8 315.0 L1646.7 316.1 L1645.6 317.2 L1644.5 318.2 L1643.5 319.3 L1642.5 320.2 L1641.5 321.2 L1640.5 322.1 L1639.4 322.9 L1638.4 323.8 L1637.3 324.7 L1636.2 325.6 L1635.1 326.5 L1634.1 327.4 L1633.0 328.2 L1632.0 329.1 L1631.0 329.9 L1630.0 330.6 L1629.0 331.4 L1628.0 332.1 L1627.0 332.7 L1626.1 333.3 L1625.1 333.9 L1624.2 334.4 L1623.3 334.9 L1622.3 335.3 L1621.4 335.7 L1620.4 336.1 L1619.4 336.5 L1618.5 336.8 L1617.5 337.1 L1616.5 337.3 L1615.6 337.5 L1614.6 337.7 L1613.7 337.9 L1612.7 338.0 L1611.8 338.1 L1610.8 338.2 L1609.9 338.3 L1609.0 338.3 L1608.1 338.3 L1607.1 338.3 L1606.2 338.2 L1605.2 338.1 L1604.2 338.0 L1603.3 337.9 L1602.3 337.7 L1601.3 337.5 L1600.3 337.3 L1599.4 337.0 L1598.5 336.7 L1597.7 336.4 L1596.9 336.1 L1596.1 335.8 L1595.5 335.4 L1594.9 335.1 L1594.4 334.8 L1593.9 334.4 L1593.5 334.0 L1593.0 333.6 L1592.6 333.1 L1592.2 332.5 L1591.8 331.9 L1591.4 331.2 L1591.0 330.6 L1590.7 329.9 L1590.4 329.2 L1590.1 328.5 L1589.9 327.8 L1589.7 327.2 L1589.5 326.5 L1589.4 325.9 L1589.2 325.4 L1589.2 324.8 L1589.1 324.3 L1589.1 323.8 L1589.0 323.3 L1589.0 322.9 L1589.1 322.4 L1589.1 322.0 L1589.2 321.6 L1589.3 321.3 L1589.4 320.9 L1589.6 320.6 L1589.8 320.2 L1590.0 319.9 L1590.2 319.6 L1590.6 319.2 L1590.9 318.9 L1591.4 318.4 L1592.0 318.0 L1592.7 317.5 L1593.5 317.0 L1594.4 316.5 L1595.3 316.0 L1596.3 315.5 L1597.3 315.0 L1598.4 314.6 L1599.5 314.1 L1600.6 313.7 L1601.6 313.4 L1602.6 313.1 L1603.6 312.8 L1604.6 312.6 L1605.4 312.4 L1606.2 312.2 L1607.1 312.1 L1607.9 312.0 L1608.8 312.0 L1609.6 311.9 L1610.5 312.0 L1611.4 312.0 L1612.3 312.1 L1613.2 312.2 L1614.1 312.3 L1615.0 312.5 L1615.9 312.7 L1616.8 312.9 L1617.6 313.1 L1618.5 313.4 L1619.3 313.6 L1620.1 313.9 L1620.8 314.1 L1621.5 314.5 L1622.3 314.8 L1623.0 315.2 L1623.7 315.7 L1624.4 316.1 L1625.1 316.6 L1625.8 317.1 L1626.5 317.6 L1627.2 318.2 L1627.9 318.7 L1628.7 319.2 L1629.4 319.7 L1630.1 320.2 L1630.9 320.7 Z" fill="#16248e"/>
<path d="M1628.1 320.3 L1627.3 319.7 L1626.4 319.1 L1625.6 318.5 L1624.7 317.9 L1623.9 317.2 L1623.0 316.6 L1622.2 315.9 L1621.3 315.3 L1620.5 314.6 L1619.6 314.0 L1618.8 313.4 L1617.9 312.9 L1617.0 312.4 L1616.2 311.9 L1615.3 311.4 L1614.4 311.1 L1613.6 310.7 L1612.7 310.4 L1611.9 310.2 L1611.0 309.9 L1610.1 309.7 L1609.3 309.5 L1608.4 309.4 L1607.5 309.3 L1606.6 309.2 L1605.7 309.2 L1604.9 309.2 L1604.0 309.3 L1603.1 309.4 L1602.3 309.6 L1601.4 309.9 L1600.6 310.2 L1599.7 310.6 L1598.9 311.1 L1598.1 311.6 L1597.3 312.2 L1596.6 312.8 L1595.9 313.5 L1595.2 314.3 L1594.6 315.0 L1594.0 315.8 L1593.4 316.6 L1592.9 317.4 L1592.4 318.3 L1592.0 319.2 L1591.6 320.1 L1591.3 321.0 L1591.0 322.0 L1591.1 323.1 L1591.2 324.0 L1591.4 325.0 L1591.6 325.9 L1592.0 326.8 L1592.3 327.7 L1592.8 328.5 L1593.2 329.3 L1593.7 330.0 L1594.3 330.8 L1594.8 331.5 L1595.4 332.1 L1596.1 332.7 L1596.7 333.3 L1597.4 333.9 L1598.2 334.4 L1599.0 334.8 L1599.9 335.1 L1600.8 335.3 L1601.7 335.5 L1602.6 335.6 L1603.4 335.6 L1604.3 335.7 L1605.2 335.7 L1606.1 335.7 L1606.9 335.7 L1607.8 335.7 L1608.7 335.6 L1609.5 335.6 L1610.3 335.6 L1611.1 335.7 L1611.9 335.7 L1612.1 335.3 L1611.3 334.9 L1610.6 334.6 L1609.8 334.2 L1609.0 333.9 L1608.2 333.6 L1607.4 333.2 L1606.6 332.9 L1605.9 332.6 L1605.1 332.2 L1604.5 331.9 L1603.8 331.5 L1603.3 331.1 L1602.8 330.8 L1602.4 330.4 L1602.1 330.0 L1601.8 329.6 L1601.6 329.3 L1601.3 328.9 L1601.0 328.4 L1600.8 328.0 L1600.5 327.5 L1600.3 327.0 L1600.1 326.5 L1600.0 326.0 L1599.9 325.5 L1599.8 325.0 L1599.7 324.6 L1599.7 324.1 L1599.7 323.8 L1599.8 323.4 L1599.9 323.2 L1600.0 323.0 L1599.9 322.7 L1599.9 322.4 L1599.9 321.9 L1600.0 321.4 L1600.2 320.9 L1600.4 320.3 L1600.6 319.7 L1600.8 319.1 L1601.1 318.6 L1601.5 318.0 L1601.8 317.4 L1602.1 316.9 L1602.5 316.5 L1602.8 316.1 L1603.1 315.7 L1603.4 315.4 L1603.8 315.2 L1604.2 314.9 L1604.6 314.7 L1605.1 314.4 L1605.7 314.2 L1606.3 314.1 L1606.9 313.9 L1607.6 313.8 L1608.3 313.7 L1609.0 313.6 L1609.7 313.6 L1610.5 313.6 L1611.2 313.7 L1612.0 313.7 L1612.8 313.8 L1613.6 313.9 L1614.3 314.1 L1615.1 314.3 L1616.0 314.6 L1616.8 315.0 L1617.7 315.3 L1618.6 315.8 L1619.5 316.2 L1620.4 316.7 L1621.4 317.2 L1622.3 317.7 L1623.2 318.2 L1624.2 318.7 L1625.1 319.3 L1626.0 319.8 L1627.0 320.2 L1627.9 320.7 Z" fill="#f43a9c"/>
<path d="M1628.1 322.3 L1627.3 322.0 L1626.5 321.6 L1625.7 321.2 L1624.8 320.8 L1624.0 320.4 L1623.2 320.0 L1622.4 319.6 L1621.6 319.3 L1620.8 318.9 L1619.9 318.5 L1619.1 318.2 L1618.3 317.8 L1617.5 317.5 L1616.8 317.2 L1616.0 317.0 L1615.2 316.8 L1614.5 316.6 L1613.7 316.4 L1613.0 316.3 L1612.2 316.2 L1611.5 316.1 L1610.7 316.0 L1610.0 316.0 L1609.3 315.9 L1608.6 315.9 L1607.9 315.9 L1607.2 316.0 L1606.5 316.1 L1605.9 316.2 L1605.2 316.3 L1604.6 316.5 L1604.0 316.8 L1603.4 317.1 L1602.9 317.5 L1602.4 318.0 L1602.0 318.5 L1601.6 319.0 L1601.3 319.6 L1601.0 320.1 L1600.8 320.7 L1600.6 321.3 L1600.4 321.8 L1600.3 322.4 L1600.2 323.0 L1600.1 323.6 L1600.0 324.1 L1600.0 324.7 L1600.0 325.2 L1600.1 325.8 L1600.3 326.3 L1600.4 326.9 L1600.6 327.4 L1600.9 328.0 L1601.1 328.5 L1601.4 329.0 L1601.7 329.5 L1602.0 330.0 L1602.4 330.5 L1602.8 331.0 L1603.2 331.4 L1603.6 331.8 L1604.0 332.2 L1604.5 332.6 L1605.0 332.9 L1605.5 333.2 L1606.1 333.4 L1606.7 333.5 L1607.3 333.6 L1607.8 333.7 L1608.4 333.7 L1609.0 333.7 L1609.6 333.7 L1610.1 333.7 L1610.7 333.7 L1611.3 333.7 L1611.8 333.7 L1612.4 333.7 L1612.9 333.7 L1613.4 333.7 L1614.0 333.7 L1614.0 333.3 L1613.6 333.1 L1613.0 332.9 L1612.5 332.7 L1612.0 332.5 L1611.4 332.3 L1610.9 332.2 L1610.4 332.0 L1609.9 331.8 L1609.4 331.6 L1608.9 331.4 L1608.5 331.2 L1608.1 331.0 L1607.8 330.8 L1607.5 330.6 L1607.2 330.3 L1607.0 330.1 L1606.8 329.9 L1606.6 329.6 L1606.4 329.3 L1606.2 329.0 L1606.0 328.6 L1605.8 328.3 L1605.6 327.9 L1605.5 327.5 L1605.3 327.2 L1605.2 326.8 L1605.1 326.4 L1605.1 326.0 L1605.0 325.7 L1605.0 325.4 L1605.0 325.1 L1605.0 324.8 L1604.9 324.5 L1604.9 324.2 L1604.9 323.8 L1604.9 323.5 L1604.9 323.1 L1604.9 322.8 L1605.0 322.4 L1605.0 322.1 L1605.1 321.7 L1605.2 321.4 L1605.3 321.2 L1605.4 320.9 L1605.6 320.7 L1605.7 320.5 L1605.8 320.4 L1606.0 320.2 L1606.2 320.1 L1606.5 319.9 L1606.9 319.8 L1607.3 319.6 L1607.7 319.5 L1608.3 319.4 L1608.8 319.3 L1609.4 319.2 L1610.0 319.1 L1610.7 319.1 L1611.3 319.1 L1612.0 319.1 L1612.7 319.1 L1613.4 319.1 L1614.1 319.2 L1614.8 319.2 L1615.5 319.3 L1616.2 319.4 L1617.0 319.5 L1617.7 319.7 L1618.5 319.9 L1619.4 320.1 L1620.2 320.4 L1621.1 320.6 L1621.9 320.9 L1622.8 321.1 L1623.6 321.4 L1624.5 321.7 L1625.4 322.0 L1626.2 322.2 L1627.1 322.5 L1627.9 322.7 Z" fill="#f7aa3a"/>
<path d="M1653.6 324.7 L1654.4 324.2 L1655.2 323.7 L1655.9 323.2 L1656.7 322.7 L1657.4 322.2 L1658.1 321.7 L1658.9 321.3 L1659.6 320.8 L1660.4 320.3 L1661.1 319.9 L1661.8 319.4 L1662.6 319.1 L1663.4 318.7 L1664.1 318.4 L1664.9 318.1 L1665.8 317.8 L1666.7 317.6 L1667.7 317.3 L1668.8 317.0 L1669.8 316.7 L1670.9 316.4 L1672.0 316.1 L1673.1 315.9 L1674.2 315.7 L1675.3 315.6 L1676.3 315.5 L1677.3 315.4 L1678.2 315.5 L1679.0 315.5 L1679.7 315.7 L1680.3 315.9 L1680.8 316.1 L1681.3 316.5 L1681.9 316.9 L1682.6 317.4 L1683.4 318.1 L1684.1 318.8 L1684.9 319.6 L1685.6 320.4 L1686.3 321.2 L1686.9 322.1 L1687.5 323.0 L1687.9 323.8 L1688.3 324.6 L1688.5 325.2 L1688.6 325.8 L1688.6 326.1 L1688.6 326.2 L1688.7 326.2 L1688.7 326.5 L1688.7 326.9 L1688.5 327.6 L1688.2 328.3 L1687.8 329.1 L1687.3 330.0 L1686.7 330.9 L1686.1 331.8 L1685.4 332.7 L1684.7 333.6 L1683.9 334.4 L1683.2 335.1 L1682.5 335.9 L1681.8 336.5 L1681.2 337.0 L1680.7 337.4 L1680.1 337.8 L1679.4 338.2 L1678.7 338.5 L1678.0 338.8 L1677.1 339.1 L1676.3 339.3 L1675.4 339.5 L1674.4 339.7 L1673.5 339.8 L1672.5 339.9 L1671.6 340.1 L1670.7 340.2 L1669.7 340.3 L1668.9 340.4 L1668.0 340.5 L1667.3 340.6 L1666.5 340.6 L1665.8 340.6 L1665.1 340.6 L1664.5 340.6 L1663.8 340.5 L1663.1 340.5 L1662.4 340.4 L1661.8 340.3 L1661.1 340.3 L1660.5 340.2 L1659.8 340.1 L1659.1 340.0 L1658.4 339.9 L1657.7 339.9 L1657.0 339.8 L1657.0 340.2 L1657.6 340.4 L1658.3 340.6 L1658.9 340.9 L1659.5 341.1 L1660.2 341.3 L1660.8 341.6 L1661.4 341.8 L1662.1 342.1 L1662.7 342.3 L1663.4 342.5 L1664.1 342.7 L1664.8 342.9 L1665.6 343.1 L1666.3 343.3 L1667.1 343.4 L1668.0 343.5 L1668.8 343.6 L1669.7 343.8 L1670.6 343.9 L1671.5 344.1 L1672.5 344.2 L1673.5 344.3 L1674.6 344.4 L1675.7 344.5 L1676.8 344.5 L1677.9 344.5 L1679.0 344.5 L1680.2 344.3 L1681.3 344.2 L1682.5 343.9 L1683.7 343.5 L1684.8 343.0 L1685.9 342.4 L1686.9 341.8 L1688.0 341.1 L1689.1 340.3 L1690.2 339.4 L1691.3 338.5 L1692.4 337.5 L1693.4 336.5 L1694.4 335.5 L1695.4 334.3 L1696.3 333.2 L1697.1 331.9 L1697.8 330.6 L1698.4 329.1 L1698.8 327.6 L1699.0 325.8 L1698.8 324.1 L1698.2 322.6 L1697.6 321.2 L1696.8 319.9 L1696.0 318.6 L1695.0 317.4 L1694.0 316.3 L1693.0 315.2 L1691.9 314.2 L1690.7 313.2 L1689.5 312.3 L1688.3 311.4 L1687.1 310.7 L1685.8 310.0 L1684.5 309.5 L1683.2 309.1 L1681.8 308.8 L1680.5 308.7 L1679.1 308.7 L1677.8 308.8 L1676.5 309.1 L1675.2 309.4 L1674.0 309.7 L1672.7 310.2 L1671.5 310.6 L1670.4 311.1 L1669.2 311.6 L1668.1 312.1 L1667.1 312.6 L1666.1 313.2 L1665.1 313.7 L1664.2 314.2 L1663.3 314.7 L1662.4 315.3 L1661.6 315.9 L1660.9 316.5 L1660.2 317.1 L1659.5 317.8 L1658.8 318.4 L1658.2 319.1 L1657.6 319.8 L1657.0 320.4 L1656.4 321.1 L1655.8 321.8 L1655.2 322.4 L1654.6 323.1 L1654.0 323.7 L1653.4 324.3 Z" fill="#f43a9c"/>
<path d="M1653.6 326.7 L1654.4 326.3 L1655.1 325.9 L1655.9 325.5 L1656.7 325.0 L1657.4 324.6 L1658.2 324.2 L1658.9 323.7 L1659.7 323.3 L1660.4 322.9 L1661.2 322.5 L1661.9 322.2 L1662.7 321.9 L1663.4 321.6 L1664.1 321.3 L1664.8 321.1 L1665.5 320.9 L1666.2 320.7 L1666.9 320.6 L1667.7 320.4 L1668.4 320.3 L1669.2 320.2 L1669.9 320.1 L1670.7 320.0 L1671.4 320.0 L1672.1 319.9 L1672.8 320.0 L1673.5 320.0 L1674.1 320.1 L1674.7 320.2 L1675.3 320.3 L1675.8 320.5 L1676.3 320.6 L1676.8 320.9 L1677.3 321.1 L1677.8 321.5 L1678.3 321.8 L1678.9 322.2 L1679.4 322.7 L1679.9 323.1 L1680.4 323.6 L1680.8 324.1 L1681.2 324.5 L1681.5 325.0 L1681.8 325.4 L1681.9 325.8 L1682.0 326.1 L1682.1 326.3 L1682.0 326.4 L1682.1 326.4 L1682.1 326.5 L1682.1 326.8 L1682.0 327.1 L1681.9 327.5 L1681.7 328.0 L1681.4 328.5 L1681.2 329.0 L1680.8 329.5 L1680.4 330.0 L1680.0 330.5 L1679.6 331.0 L1679.1 331.4 L1678.7 331.8 L1678.2 332.2 L1677.8 332.6 L1677.4 332.9 L1676.9 333.2 L1676.3 333.5 L1675.7 333.8 L1675.1 334.1 L1674.3 334.3 L1673.6 334.6 L1672.8 334.8 L1672.1 335.0 L1671.3 335.2 L1670.5 335.4 L1669.7 335.6 L1668.9 335.7 L1668.2 335.9 L1667.5 336.1 L1666.8 336.3 L1666.2 336.4 L1665.6 336.6 L1665.0 336.7 L1664.5 336.8 L1663.9 336.9 L1663.4 337.0 L1662.8 337.1 L1662.3 337.2 L1661.8 337.3 L1661.2 337.3 L1660.7 337.4 L1660.2 337.5 L1659.6 337.5 L1659.1 337.6 L1658.5 337.7 L1658.0 337.8 L1658.0 338.2 L1658.6 338.2 L1659.1 338.3 L1659.7 338.3 L1660.2 338.4 L1660.7 338.5 L1661.2 338.5 L1661.8 338.6 L1662.3 338.6 L1662.9 338.7 L1663.4 338.7 L1664.0 338.8 L1664.6 338.8 L1665.2 338.8 L1665.9 338.8 L1666.5 338.8 L1667.2 338.7 L1667.9 338.7 L1668.6 338.6 L1669.4 338.6 L1670.2 338.5 L1671.0 338.5 L1671.8 338.4 L1672.7 338.3 L1673.5 338.2 L1674.4 338.1 L1675.3 338.0 L1676.1 337.8 L1677.0 337.6 L1677.8 337.4 L1678.6 337.1 L1679.4 336.8 L1680.2 336.4 L1680.9 336.0 L1681.6 335.5 L1682.3 335.0 L1682.9 334.5 L1683.6 334.0 L1684.2 333.4 L1684.8 332.8 L1685.3 332.1 L1685.9 331.4 L1686.4 330.7 L1686.8 330.0 L1687.2 329.2 L1687.6 328.4 L1687.8 327.6 L1688.0 326.6 L1688.0 325.6 L1687.7 324.7 L1687.4 323.8 L1686.9 323.0 L1686.4 322.3 L1685.8 321.6 L1685.2 320.9 L1684.6 320.3 L1683.9 319.7 L1683.2 319.2 L1682.4 318.6 L1681.7 318.1 L1680.9 317.7 L1680.1 317.3 L1679.3 316.9 L1678.5 316.6 L1677.7 316.4 L1676.9 316.2 L1676.1 316.1 L1675.2 316.0 L1674.4 316.0 L1673.6 316.0 L1672.7 316.0 L1671.9 316.1 L1671.0 316.2 L1670.2 316.4 L1669.3 316.6 L1668.5 316.8 L1667.7 317.0 L1666.9 317.2 L1666.1 317.5 L1665.3 317.8 L1664.5 318.1 L1663.7 318.5 L1663.0 318.9 L1662.2 319.3 L1661.5 319.8 L1660.8 320.3 L1660.1 320.8 L1659.4 321.4 L1658.7 321.9 L1658.1 322.5 L1657.4 323.0 L1656.7 323.6 L1656.1 324.2 L1655.4 324.7 L1654.7 325.3 L1654.1 325.8 L1653.4 326.3 Z" fill="#f7aa3a"/>
<text x="1594" y="375.3" font-size="25.7" font-weight="bold" fill="#16248e" stroke="#16248e" stroke-width="0.9" textLength="101.5" lengthAdjust="spacingAndGlyphs">DeepInfinity</text>
<rect x="1452" y="495" width="75" height="66" fill="#f6f6f6"/>
<circle cx="1489.4" cy="528" r="29.7" fill="#23ad4e"/>
<path d="M1481 514.5 L1507 528 L1481 541.5 z" fill="#ffffff" stroke="#ffffff" stroke-width="5" stroke-linejoin="round"/>
<path d="M1600 495.8 H1606 a2.5 2.5 0 0 1 2.5 2.5 V554.3 a2.5 2.5 0 0 1 -2.5 2.5 H1563 a2.5 2.5 0 0 1 -2.5 -2.5 V545" fill="#e8f4fc" stroke="#000" stroke-width="2"/>
<path d="M1569.6 491.2 H1602 a2.2 2.2 0 0 1 2.2 2.2 V550.2 a2.2 2.2 0 0 1 -2.2 2.2 H1558.7 a2.2 2.2 0 0 1 -2.2 -2.2 V504.3 Z" fill="#e8f4fc" stroke="#000" stroke-width="2.1" stroke-linejoin="round"/>
<path d="M1557.3 503.6 L1569.2 491.8 V501.4 a2 2 0 0 1 -2 2 Z" fill="#b8e2f6" stroke="#000" stroke-width="1.8" stroke-linejoin="round"/>
<rect x="1574.2" y="498.3" width="15.8" height="5.4" rx="2.7" fill="#9ad6f0" stroke="#000" stroke-width="1.6"/>
<rect x="1564" y="511.70000000000005" width="32" height="1.8" rx="0.9" fill="#000"/>
<rect x="1564" y="518.1" width="32" height="1.8" rx="0.9" fill="#000"/>
<rect x="1564" y="524.8000000000001" width="21" height="1.8" rx="0.9" fill="#000"/>
<rect x="1589" y="524.8000000000001" width="7" height="1.8" rx="0.9" fill="#000"/>
<rect x="1564" y="531.1" width="15" height="1.8" rx="0.9" fill="#000"/>
<rect x="1564" y="537.5" width="15" height="1.8" rx="0.9" fill="#000"/>
<rect x="1590.6" y="534.6" width="30.4" height="30.4" rx="5" fill="#0a84f0" stroke="#000" stroke-width="2.2"/>
<path d="M1605.1 538.6 Q1606 538.6 1607 539.6 L1613.3 546.8 Q1614.2 548.6 1612.2 548.6 H1608.4 V558.6 Q1608.4 560 1607 560 H1603.2 Q1601.8 560 1601.8 558.6 V548.6 H1598 Q1596 548.6 1597 546.8 L1603.2 539.6 Q1604.2 538.6 1605.1 538.6 Z" fill="#c8ecfc" stroke="#000" stroke-width="1.7" stroke-linejoin="round"/>
<text x="1444.0" y="591.0" font-size="20" font-weight="bold" fill="#242424" textLength="38.5" lengthAdjust="spacingAndGlyphs">MRI</text>
<rect x="1443.5" y="611.5" width="405" height="56" rx="6" fill="#ffffff" stroke="#dee2e6" stroke-width="1"/>
<text x="1444.0" y="715.5" font-size="20" font-weight="bold" fill="#242424" textLength="24.5" lengthAdjust="spacingAndGlyphs">CT</text>
<rect x="1443.5" y="735.5" width="405" height="56" rx="6" fill="#ffffff" stroke="#dee2e6" stroke-width="1"/>
<text x="1444.0" y="815.0" font-size="20" font-weight="bold" fill="#242424" textLength="63.5" lengthAdjust="spacingAndGlyphs">ULTRA</text>
</svg></body></html>
